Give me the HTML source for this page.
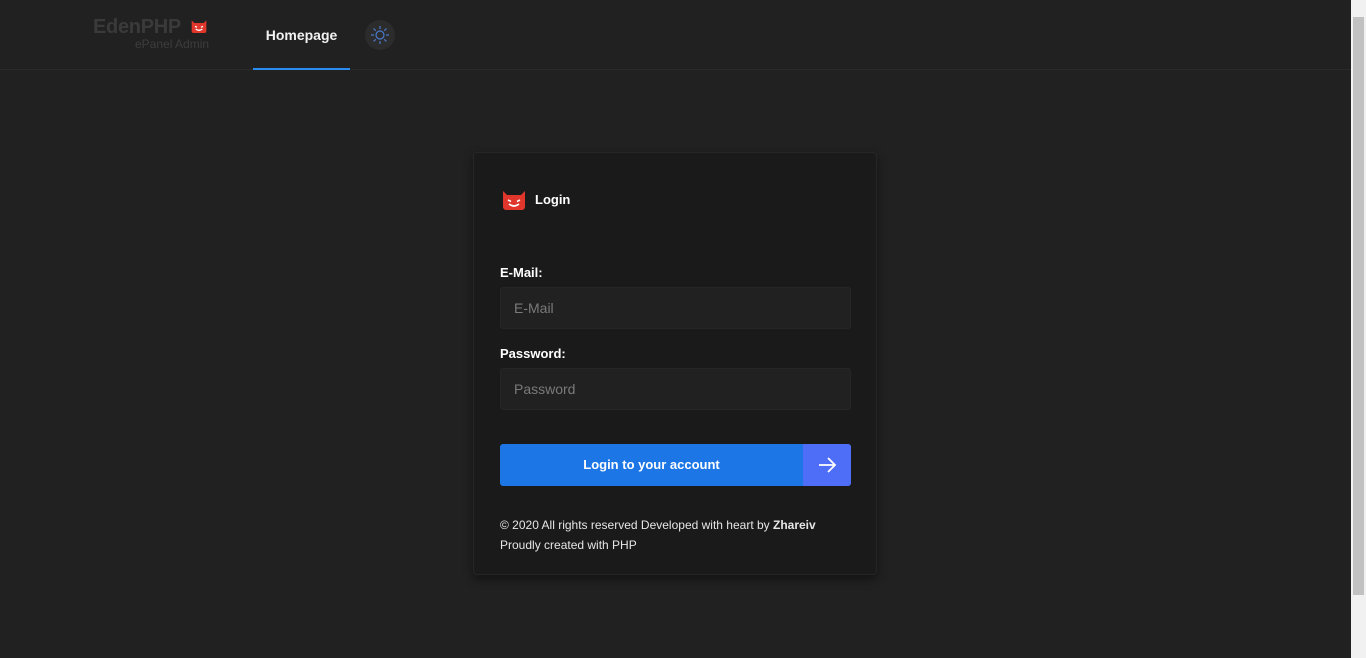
<!DOCTYPE html>
<html><head><meta charset="utf-8"><style>
*{box-sizing:border-box;margin:0;padding:0}
body{width:1366px;height:658px;background:#212121;font-family:"Liberation Sans",sans-serif;overflow:hidden;position:relative;color:#fff}
.hdr{position:absolute;left:0;top:0;width:1351px;height:70px;border-bottom:1px solid #2b2b2b}
.logo{position:absolute;left:93px;top:16px;font-weight:bold;font-size:20px;color:#3a3a3a;letter-spacing:-0.3px}
.sub{position:absolute;left:135px;top:37px;font-size:12px;color:#3d3d3d}
.nav{position:absolute;left:253px;top:0;width:97px;height:70px;text-align:center;line-height:70px;font-size:14px;font-weight:bold;color:#f2f2f2;border-bottom:2px solid #2a8cf0}
.sun{position:absolute;left:365px;top:20px;width:30px;height:30px;border-radius:50%;background:#2c2c2c}
.card{position:absolute;left:473px;top:152px;width:404px;height:423px;background:#1a1a1a;border:1px solid #262626;border-radius:4px;box-shadow:0 4px 10px rgba(0,0,0,.45)}
.lbl{position:absolute;left:26px;font-size:13px;font-weight:bold;color:#fff}
.inp{position:absolute;left:26px;width:351px;height:42px;background:#212121;border:1px solid #262626;border-radius:3px;font-size:14px;color:#7a7a7a;padding-left:13px;line-height:40px}
.btn{position:absolute;left:26px;top:291px;width:351px;height:42px;background:#1d76e6;border-radius:3px;overflow:hidden}
.btn span{position:absolute;left:0;width:303px;text-align:center;line-height:42px;font-size:13px;font-weight:bold}
.btn .ar{position:absolute;right:0;top:0;width:48px;height:42px;background:#4f6ef7}
.ft{position:absolute;left:26px;font-size:12px;color:#e6e6e6}
.sb{position:absolute;left:1351px;top:0;width:15px;height:658px;background:#f1f1f1}
.th{position:absolute;left:1353px;top:17px;width:11px;height:578px;background:#c1c1c1}
</style></head><body>
<div class="hdr">
 <div class="logo">EdenPHP</div>
 <svg style="position:absolute;left:191px;top:20px" width="16" height="14" viewBox="0 0 24 20"><path d="M1 0l4 4h14l4-4v16a3 3 0 0 1-3 3H4a3 3 0 0 1-3-3z" fill="#e0362b"/><path d="M6 9l3 1.5M18 9l-3 1.5M7 13q5 4 10 0" stroke="#fff" stroke-width="2" fill="none"/></svg>
 <div class="sub">ePanel Admin</div>
 <div class="nav">Homepage</div>
 <div class="sun"><svg width="30" height="30" viewBox="0 0 30 30" fill="none" stroke="#4a7ad0" stroke-width="1.2"><circle cx="15" cy="15" r="4"/><path d="M15 6v3M15 21v3M6 15h3M21 15h3M8.6 8.6l2.1 2.1M19.3 19.3l2.1 2.1M8.6 21.4l2.1-2.1M19.3 10.7l2.1-2.1"/></svg></div>
</div>
<div class="card">
 <svg style="position:absolute;left:28px;top:38px" width="24" height="20" viewBox="0 0 24 20"><path d="M1 0l4 4h14l4-4v16a3 3 0 0 1-3 3H4a3 3 0 0 1-3-3z" fill="#e0362b"/><path d="M6 9l3 1.5M18 9l-3 1.5M7 13q5 4 10 0" stroke="#fff" stroke-width="1.6" fill="none"/></svg>
 <div style="position:absolute;left:61px;top:39px;font-size:13px;font-weight:bold">Login</div>
 <div class="lbl" style="top:112px">E-Mail:</div>
 <div class="inp" style="top:134px">E-Mail</div>
 <div class="lbl" style="top:193px">Password:</div>
 <div class="inp" style="top:215px">Password</div>
 <div class="btn"><span>Login to your account</span><div class="ar"><svg width="48" height="42" viewBox="0 0 48 42" fill="none" stroke="#fff" stroke-width="1.8"><path d="M16 21h16M25 14l7 7-7 7"/></svg></div></div>
 <div class="ft" style="top:365px">© 2020 All rights reserved Developed with heart by <b>Zhareiv</b></div>
 <div class="ft" style="top:385px">Proudly created with PHP</div>
</div>
<div class="sb"></div><div class="th"></div>
</body></html>
